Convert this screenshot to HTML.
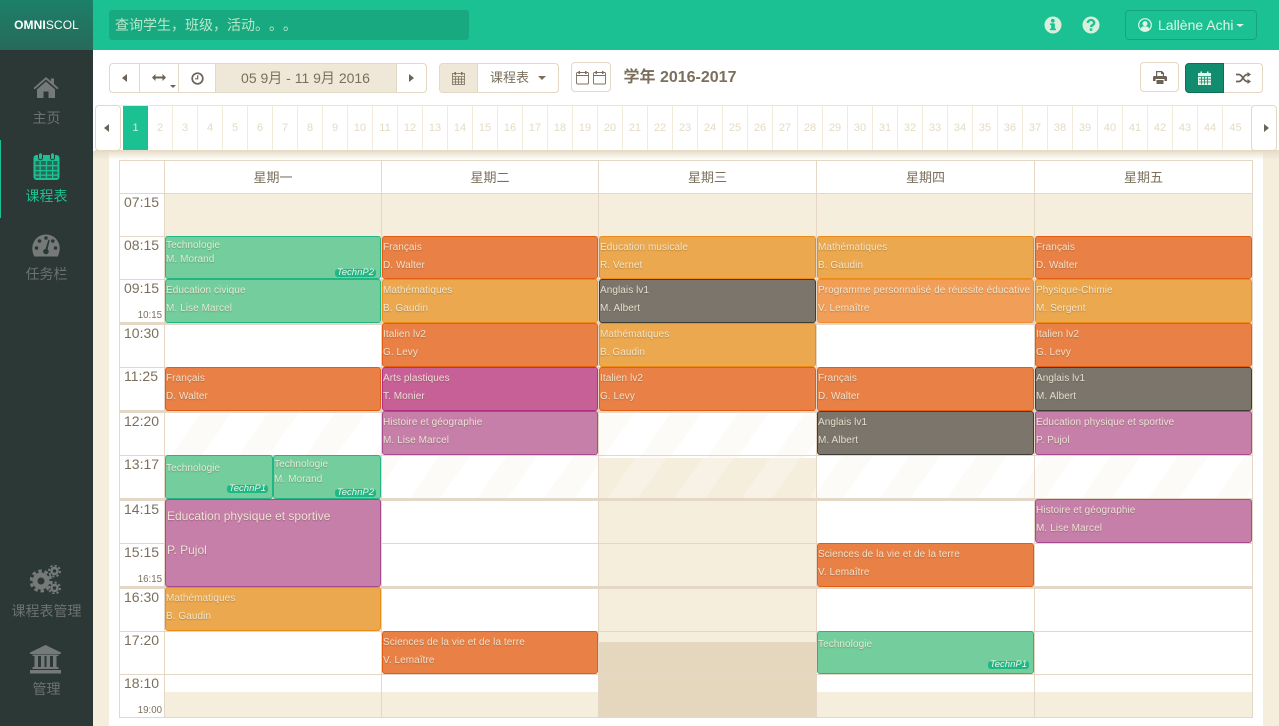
<!DOCTYPE html>
<html lang="zh"><head><meta charset="utf-8"><title>课程表</title>
<style>
*{box-sizing:border-box}
html,body{margin:0;padding:0;width:1279px;height:726px;overflow:hidden;background:#fff;font-family:"Liberation Sans","Noto Sans CJK SC",sans-serif;text-spacing-trim:space-all}
.a{position:absolute}
#side{left:0;top:0;width:93px;height:726px;background:#2b3835}
#logo{left:0;top:0;width:93px;height:50px;background:linear-gradient(#1c8068,#276a5c);color:#fff;font-size:12px;line-height:50px;text-align:center;letter-spacing:.1px}
#top{left:93px;top:0;width:1186px;height:50px;background:#1cc193}
#search{left:109px;top:10px;width:360px;height:30px;background:#19a981;border-radius:3px;color:#b6e8c9;font-size:14px;line-height:30px;padding-left:6px}
.nav{left:0;width:93px;text-align:center;font-size:14px;color:#6c7270;line-height:18px}
.btn{border:1px solid #e4d7c3;border-radius:4px;background:#fff;height:30px}
.sep{width:1px;background:#e4d7c3}
.wk{top:106px;height:44px;width:25px;border-right:1px solid #f3ead9;text-align:center;font-size:11px;line-height:44px;color:#e5dbc6}
.day{top:162px;height:32px;line-height:32px;text-align:center;font-size:13px;color:#7b6f5c}
.h{left:120px;width:1132px;height:1px;background:#e4d7c6}
.th{left:120px;width:1132px;height:3px;background:#e4d7c6}
.v{top:160px;width:1px;height:557px;background:#e4d7c6}
.t{left:124px;font-size:14px;line-height:16px;color:#7b6f5c}
.ts{left:120px;width:42px;text-align:right;font-size:9.700px;line-height:10px;color:#7b6f5c}
.e{position:absolute;border:1px solid;border-radius:3px;color:rgba(250,246,228,.84);font-size:10px;letter-spacing:.07px;line-height:18px;padding-top:2px;white-space:nowrap;overflow:hidden;text-shadow:0 1px 1px rgba(60,50,30,.3)}
.g{background:#74cd9d;border-color:#22b585}
.o{background:#e98146;border-color:#e25c12}
.y{background:#eba84e;border-color:#ec8c18}
.k{background:#7b756c;border-color:#3d3d36}
.m{background:#c86098;border-color:#b02f80}
.u{background:#c57fa8;border-color:#a8488e}
.l{background:#f09e58;border-color:#ee8c30}
.c1{left:165px;width:216px}.c2{left:382px;width:216px}.c3{left:599px;width:217px}.c4{left:817px;width:217px}.c5{left:1035px;width:217px}
.tag{position:absolute;right:4px;bottom:1px;height:8px;line-height:8px;background:#20b785;border-radius:3px;font-size:9.500px;letter-spacing:0;font-style:italic;color:#eef8ea;padding:0 2px;text-shadow:none}
svg{display:block}
</style></head><body>

<!-- page background -->
<div class="a" style="left:93px;top:151px;width:16px;height:575px;background:#f5eedd"></div>
<div class="a" style="left:1263px;top:151px;width:16px;height:575px;background:#f5eedd"></div>
<div class="a" style="left:93px;top:151px;width:16px;height:9px;background:linear-gradient(#e6dcc8,#f5eedd)"></div>
<div class="a" style="left:1263px;top:151px;width:16px;height:9px;background:linear-gradient(#e6dcc8,#f5eedd)"></div>
<div class="a" style="left:109px;top:151px;width:1154px;height:9px;background:linear-gradient(#e9dfcb,#f7f2e6 60%,#fff)"></div>

<!-- top bar -->
<div class="a" id="top"></div>
<div class="a" id="search">查询学生，班级，活动。。。</div>
<svg class="a" style="left:1044px;top:16px" width="18" height="18" viewBox="0 0 18 18"><circle cx="9" cy="9" r="8.500" fill="#d6f0dc"/><rect x="7.200" y="7.400" width="3.600" height="6.600" fill="#1cc193"/><rect x="6" y="7.400" width="4" height="1.600" fill="#1cc193"/><rect x="6" y="12.600" width="6" height="1.600" fill="#1cc193"/><circle cx="8.800" cy="4.800" r="1.900" fill="#1cc193"/></svg>
<svg class="a" style="left:1082px;top:16px" width="18" height="18" viewBox="0 0 18 18"><circle cx="9" cy="9" r="8.500" fill="#d6f0dc"/><path d="M5.800 7a3.200 3 0 0 1 6.400 0c0 2-3.200 2.200-3.200 4" fill="none" stroke="#1cc193" stroke-width="2.300"/><rect x="7.800" y="12.400" width="2.500" height="2.400" fill="#1cc193"/></svg>
<div class="a" style="left:1125px;top:10px;width:132px;height:30px;border:1px solid #17a47d;border-radius:4px"></div>
<svg class="a" style="left:1138px;top:18px" width="14" height="14" viewBox="0 0 14 14"><circle cx="7" cy="7" r="6.300" fill="none" stroke="#e0f5e8" stroke-width="1.200"/><circle cx="7" cy="5.600" r="2.500" fill="#e0f5e8"/><path d="M2.600 11.200c.6-2.400 2.400-3 4.400-3s3.800.6 4.400 3a6 6 0 0 1-8.800 0z" fill="#e0f5e8"/></svg>
<div class="a" style="left:1158px;top:10px;height:30px;line-height:30px;font-size:14px;color:#e0f5e8;white-space:nowrap">Lallène Achi</div>
<div class="a" style="left:1236px;top:24px;border-left:4px solid transparent;border-right:4px solid transparent;border-top:3.500px solid #e0f5e8"></div>

<!-- sidebar -->
<div class="a" id="side"></div>
<div class="a" id="logo"><b>OMNI</b>SCOL</div>
<div class="a" style="left:0;top:140px;width:1px;height:78px;background:#1cc193"></div>
<svg class="a" style="left:33px;top:76px" width="26" height="23" viewBox="0 0 26 23" fill="#757a79"><path d="M13 1 .5 12l1.200 1.400L13 3.500l11.300 9.900 1.200-1.400L21 8V2.500h-3.200v2.700z"/><path d="M13 5.500 4 13.400V22h6.500v-6.500h5V22H22v-8.600z"/></svg>
<div class="a nav" style="top:109px">主页</div>
<svg class="a" style="left:33px;top:152px" width="27" height="28" viewBox="0 0 27 28"><rect x=".5" y="3" width="26" height="25" rx="3" fill="#1cc193"/><rect x="2.500" y="9" width="22" height="17" fill="#2b6a58"/><g fill="#1cc193"><rect x="6.500" y="9" width="1.300" height="17"/><rect x="12.800" y="9" width="1.300" height="17"/><rect x="19" y="9" width="1.300" height="17"/><rect x="2.500" y="13" width="22" height="1.300"/><rect x="2.500" y="18" width="22" height="1.300"/><rect x="2.500" y="22.500" width="22" height="1.300"/></g><rect x="5.500" y=".8" width="4" height="7" rx="2" fill="#1cc193" stroke="#2b3835" stroke-width="1"/><rect x="17.500" y=".8" width="4" height="7" rx="2" fill="#1cc193" stroke="#2b3835" stroke-width="1"/></svg>
<div class="a nav" style="top:187px;color:#1cc193">课程表</div>
<svg class="a" style="left:32px;top:234px" width="28" height="23" viewBox="0 0 28 23"><path d="M14 .5A13.700 13.700 0 0 0 .3 14.200c0 3 .7 5.600 2 8.300h23.400c1.300-2.700 2-5.300 2-8.300A13.700 13.700 0 0 0 14 .5z" fill="#757a79"/><g fill="#2b3835"><circle cx="4.500" cy="14" r="1.800"/><circle cx="7.500" cy="7" r="1.800"/><circle cx="14" cy="4" r="1.800"/><circle cx="23.500" cy="14" r="1.800"/><circle cx="20.800" cy="7" r="1.800"/><path d="M16.500 5.500 17.800 6 15.600 15.200a2.800 2.800 0 1 1-2-.5z"/></g></svg>
<div class="a nav" style="top:265px">任务栏</div>
<svg class="a" style="left:30px;top:565px" width="32" height="29" viewBox="0 0 32 29"><g fill="none" stroke="#757a79"><circle cx="11" cy="16" r="6" stroke-width="5"/><circle cx="11" cy="16" r="10" stroke-width="3" stroke-dasharray="3.500 2.800"/><circle cx="24.500" cy="6" r="3" stroke-width="2.500"/><circle cx="24.500" cy="6" r="5.500" stroke-width="2" stroke-dasharray="2.200 2.100"/><circle cx="24.500" cy="23" r="3" stroke-width="2.500"/><circle cx="24.500" cy="23" r="5.500" stroke-width="2" stroke-dasharray="2.200 2.100"/></g></svg>
<div class="a nav" style="top:602px">课程表管理</div>
<svg class="a" style="left:30px;top:645px" width="31" height="29" viewBox="0 0 31 29" fill="#757a79"><path d="M15.500 0 0 7.500V9h31V7.500z"/><rect x="2.500" y="9.500" width="26" height="1.500"/><rect x="4.500" y="11" width="3.500" height="11"/><rect x="11" y="11" width="3.500" height="11"/><rect x="16.500" y="11" width="3.500" height="11"/><rect x="23" y="11" width="3.500" height="11"/><rect x="2.500" y="22" width="26" height="2"/><rect x="0" y="25" width="31" height="3.500"/></svg>
<div class="a nav" style="top:680px">管理</div>

<!-- toolbar -->
<div class="a btn" style="left:109px;top:63px;width:318px"></div>
<div class="a" style="left:215px;top:64px;width:181px;height:28px;background:#efe7d7"></div>
<div class="a sep" style="left:139px;top:64px;height:28px"></div>
<div class="a sep" style="left:178px;top:64px;height:28px"></div>
<div class="a sep" style="left:215px;top:64px;height:28px"></div>
<div class="a sep" style="left:396px;top:64px;height:28px"></div>
<div class="a" style="left:122px;top:74px;border-top:4px solid transparent;border-bottom:4px solid transparent;border-right:5px solid #6b6356"></div>
<svg class="a" style="left:152px;top:73px" width="14" height="9" viewBox="0 0 14 9" fill="#6b6356"><path d="M0 4.500 3.500 1v2.500h7V1L14 4.500 10.500 8V5.500h-7V8z"/></svg>
<div class="a" style="left:170px;top:85px;border-left:3px solid transparent;border-right:3px solid transparent;border-top:3px solid #6b6356"></div>
<svg class="a" style="left:191px;top:72px" width="13" height="13" viewBox="0 0 13 13"><circle cx="6.500" cy="6.500" r="5.300" fill="none" stroke="#6b6356" stroke-width="1.700"/><path d="M6.700 3.200v3.600H4" fill="none" stroke="#6b6356" stroke-width="1.200"/></svg>
<div class="a" style="left:215px;top:64px;width:181px;height:28px;line-height:28px;text-align:center;font-size:14px;color:#7b6f5c">05 9月 - 11 9月 2016</div>
<div class="a" style="left:409px;top:74px;border-top:4px solid transparent;border-bottom:4px solid transparent;border-left:5px solid #6b6356"></div>

<div class="a btn" style="left:439px;top:63px;width:120px"></div>
<div class="a" style="left:440px;top:64px;width:38px;height:28px;background:#efe7d7;border-right:1px solid #e4d7c3;border-radius:3px 0 0 3px"></div>
<svg class="a" style="left:452px;top:71px" width="13" height="14" viewBox="0 0 13 14"><g fill="none" stroke="#7b6f5c" stroke-width=".8"><rect x=".5" y="2.500" width="12" height="11"/><path d="M.5 5.500h12M.5 8.200h12M.5 11h12M3.500 5.500v8M6.500 5.500v8M9.500 5.500v8"/></g><rect x="2.500" y="1" width="1.500" height="3" fill="#7b6f5c"/><rect x="9" y="1" width="1.500" height="3" fill="#7b6f5c"/></svg>
<div class="a" style="left:490px;top:64px;line-height:28px;font-size:13px;color:#7b6f5c">课程表</div>
<div class="a" style="left:538px;top:76px;border-left:4px solid transparent;border-right:4px solid transparent;border-top:4px solid #7b6f5c"></div>

<div class="a btn" style="left:571px;top:62px;width:40px"></div>
<svg class="a" style="left:576px;top:70px" width="30" height="15" viewBox="0 0 30 15"><g fill="none" stroke="#7b6f5c" stroke-width=".9"><rect x=".5" y="2.500" width="12" height="11.500" rx="1"/><rect x="17.500" y="2.500" width="12" height="11.500" rx="1"/><path d="M.5 5.500h12M17.500 5.500h12"/></g><g fill="#7b6f5c"><rect x="2.500" y="1" width="1.500" height="3"/><rect x="9" y="1" width="1.500" height="3"/><rect x="19.500" y="1" width="1.500" height="3"/><rect x="26" y="1" width="1.500" height="3"/></g></svg>
<div class="a" style="left:623.500px;top:67px;line-height:22px;font-size:16px;font-weight:bold;color:#7b6f5c;white-space:nowrap">学年 2016-2017</div>

<div class="a btn" style="left:1140px;top:62px;width:39px"></div>
<svg class="a" style="left:1153px;top:71px" width="14" height="13" viewBox="0 0 14 13" fill="#6b6356"><path d="M3 0h6l2 2v3H9.800V3H8V1.200H4.200V5H3z"/><path d="M1.500 5h11A1.500 1.500 0 0 1 14 6.500V10h-2.500V8h-9v2H0V6.500A1.500 1.500 0 0 1 1.500 5z"/><path d="M3.500 9h7v4h-7z"/></svg>
<div class="a btn" style="left:1185px;top:63px;width:78px"></div>
<div class="a" style="left:1185px;top:63px;width:39px;height:30px;background:#128c6e;border:1px solid #0e6f57;border-radius:4px 0 0 4px"></div>
<svg class="a" style="left:1198px;top:71px" width="13" height="14" viewBox="0 0 13 14"><rect x="0" y="2" width="13" height="12" fill="#e6f5ea"/><g fill="none" stroke="#128c6e" stroke-width=".8"><path d="M0 5.500h13M1 8.200h12M1 11h12M3.500 5.500v8M6.500 5.500v8M9.500 5.500v8"/></g><rect x="2.500" y=".5" width="1.500" height="3.500" fill="#e6f5ea"/><rect x="9" y=".5" width="1.500" height="3.500" fill="#e6f5ea"/></svg>
<svg class="a" style="left:1236px;top:72px" width="15" height="12" viewBox="0 0 15 12"><g fill="none" stroke="#6b6356" stroke-width="1.700"><path d="M0 2.500h3c3.500 0 4.500 7 8 7h1"/><path d="M0 9.500h3c3.500 0 4.500-7 8-7h1"/></g><path d="M11.500 0 15 2.500 11.500 5zM11.500 7 15 9.500 11.500 12z" fill="#6b6356"/></svg>

<!-- week scroller -->
<div class="a" style="left:121px;top:105px;width:1131px;height:1px;background:#eee4d3"></div>
<div class="a" style="left:95px;top:150px;width:1184px;height:2px;background:#e6dcc8"></div>
<div class="a" style="left:95px;top:105px;width:26px;height:46px;background:#fff;border:1px solid #e4d7c3;border-radius:4px"></div>
<div class="a" style="left:104px;top:124px;border-top:4px solid transparent;border-bottom:4px solid transparent;border-right:5px solid #6b6356"></div>
<div class="a" style="left:1251px;top:105px;width:26px;height:46px;background:#fff;border:1px solid #e4d7c3;border-radius:4px"></div>
<div class="a" style="left:1264px;top:124px;border-top:4px solid transparent;border-bottom:4px solid transparent;border-left:5px solid #6b6356"></div>
<div class="a wk" style="left:123px;background:#1cc193;color:#cdeedb;border:0">1</div>
<div class="a wk" style="left:148px">2</div><div class="a wk" style="left:173px">3</div><div class="a wk" style="left:198px">4</div><div class="a wk" style="left:223px">5</div><div class="a wk" style="left:248px">6</div><div class="a wk" style="left:273px">7</div><div class="a wk" style="left:298px">8</div><div class="a wk" style="left:323px">9</div><div class="a wk" style="left:348px">10</div><div class="a wk" style="left:373px">11</div><div class="a wk" style="left:398px">12</div><div class="a wk" style="left:423px">13</div><div class="a wk" style="left:448px">14</div><div class="a wk" style="left:473px">15</div><div class="a wk" style="left:498px">16</div><div class="a wk" style="left:523px">17</div><div class="a wk" style="left:548px">18</div><div class="a wk" style="left:573px">19</div><div class="a wk" style="left:598px">20</div><div class="a wk" style="left:623px">21</div><div class="a wk" style="left:648px">22</div><div class="a wk" style="left:673px">23</div><div class="a wk" style="left:698px">24</div><div class="a wk" style="left:723px">25</div><div class="a wk" style="left:748px">26</div><div class="a wk" style="left:773px">27</div><div class="a wk" style="left:798px">28</div><div class="a wk" style="left:823px">29</div><div class="a wk" style="left:848px">30</div><div class="a wk" style="left:873px">31</div><div class="a wk" style="left:898px">32</div><div class="a wk" style="left:923px">33</div><div class="a wk" style="left:948px">34</div><div class="a wk" style="left:973px">35</div><div class="a wk" style="left:998px">36</div><div class="a wk" style="left:1023px">37</div><div class="a wk" style="left:1048px">38</div><div class="a wk" style="left:1073px">39</div><div class="a wk" style="left:1098px">40</div><div class="a wk" style="left:1123px">41</div><div class="a wk" style="left:1148px">42</div><div class="a wk" style="left:1173px">43</div><div class="a wk" style="left:1198px">44</div><div class="a wk" style="left:1223px;border-right:0">45</div>

<!-- grid backgrounds -->
<div class="a" style="left:165px;top:194px;width:1087px;height:42px;background:#f5eedd"></div>
<div class="a" style="left:165px;top:692px;width:1087px;height:25px;background:#f5eedd"></div>
<div class="a" style="left:165px;top:412px;width:1087px;height:87px;background:repeating-linear-gradient(125deg,#fff 0,#fff 30px,#fdfbf7 30px,#fdfbf7 55px)"></div>
<div class="a" style="left:599px;top:458px;width:217px;height:184px;background:#f5eedd"></div>
<div class="a" style="left:599px;top:458px;width:217px;height:41px;background:repeating-linear-gradient(125deg,#f5eedd 0,#f5eedd 30px,#f7f2e5 30px,#f7f2e5 55px)"></div>
<div class="a" style="left:598px;top:642px;width:218px;height:75px;background:#e4d7bd"></div>

<!-- grid lines -->
<div class="a" style="left:119px;top:160px;width:1134px;height:558px;border:1px solid #e4d7c6"></div>
<div class="a h" style="top:193px"></div><div class="a h" style="top:236px"></div><div class="a h" style="top:279px"></div><div class="a th" style="top:322px"></div><div class="a h" style="top:367px"></div><div class="a th" style="top:410px"></div><div class="a h" style="top:455px"></div><div class="a th" style="top:498px"></div><div class="a h" style="top:543px"></div><div class="a th" style="top:586px"></div><div class="a h" style="top:631px"></div><div class="a h" style="top:674px"></div>
<div class="a v" style="left:164px"></div><div class="a v" style="left:381px"></div><div class="a v" style="left:598px"></div><div class="a v" style="left:816px"></div><div class="a v" style="left:1034px"></div>

<div class="a day" style="left:165px;width:216px">星期一</div><div class="a day" style="left:382px;width:216px">星期二</div><div class="a day" style="left:599px;width:217px">星期三</div><div class="a day" style="left:817px;width:217px">星期四</div><div class="a day" style="left:1035px;width:217px">星期五</div>

<div class="a t" style="top:194px">07:15</div><div class="a t" style="top:237px">08:15</div><div class="a t" style="top:280px">09:15</div><div class="a ts" style="top:311px">10:15</div><div class="a t" style="top:325px">10:30</div><div class="a t" style="top:368px">11:25</div><div class="a t" style="top:413px">12:20</div><div class="a t" style="top:456px">13:17</div><div class="a t" style="top:501px">14:15</div><div class="a t" style="top:544px">15:15</div><div class="a ts" style="top:575px">16:15</div><div class="a t" style="top:589px">16:30</div><div class="a t" style="top:632px">17:20</div><div class="a t" style="top:675px">18:10</div><div class="a ts" style="top:706px">19:00</div>

<!-- events: monday -->
<div class="e g c1" style="top:236px;height:43px;line-height:14px">Technologie<br>M. Morand<span class="tag">TechnP2</span></div>
<div class="e g c1" style="top:279px;height:44px">Education civique<br>M. Lise Marcel</div>
<div class="e o c1" style="top:367px;height:44px">Français<br>D. Walter</div>
<div class="e g" style="left:165px;top:455px;width:108px;height:44px;line-height:24px;padding-top:1px">Technologie<span class="tag" style="bottom:5px;line-height:8px">TechnP1</span></div>
<div class="e g" style="left:273px;top:455px;width:108px;height:44px;line-height:15px;padding-top:1px">Technologie<br>M. Morand<span class="tag">TechnP2</span></div>
<div class="e u c1" style="top:499px;height:88px;font-size:12px;letter-spacing:0;line-height:34px;padding-left:1px;padding-top:0"><span style="position:relative;top:-1px">Education physique et sportive<br>P. Pujol</span></div>
<div class="e y c1" style="top:587px;height:44px">Mathématiques<br>B. Gaudin</div>
<!-- tuesday -->
<div class="e o c2" style="top:236px;height:43px">Français<br>D. Walter</div>
<div class="e y c2" style="top:279px;height:44px">Mathématiques<br>B. Gaudin</div>
<div class="e o c2" style="top:323px;height:44px">Italien lv2<br>G. Levy</div>
<div class="e m c2" style="top:367px;height:44px">Arts plastiques<br>T. Monier</div>
<div class="e u c2" style="top:411px;height:44px">Histoire et géographie<br>M. Lise Marcel</div>
<div class="e o c2" style="top:631px;height:43px">Sciences de la vie et de la terre<br>V. Lemaître</div>
<!-- wednesday -->
<div class="e y c3" style="top:236px;height:43px">Education musicale<br>R. Vernet</div>
<div class="e k c3" style="top:279px;height:44px">Anglais lv1<br>M. Albert</div>
<div class="e y c3" style="top:323px;height:44px">Mathématiques<br>B. Gaudin</div>
<div class="e o c3" style="top:367px;height:44px">Italien lv2<br>G. Levy</div>
<!-- thursday -->
<div class="e y c4" style="top:236px;height:43px">Mathématiques<br>B. Gaudin</div>
<div class="e l c4" style="top:279px;height:44px">Programme personnalisé de réussite éducative<br>V. Lemaître</div>
<div class="e o c4" style="top:367px;height:44px">Français<br>D. Walter</div>
<div class="e k c4" style="top:411px;height:44px">Anglais lv1<br>M. Albert</div>
<div class="e o c4" style="top:543px;height:44px">Sciences de la vie et de la terre<br>V. Lemaître</div>
<div class="e g c4" style="top:631px;height:43px;line-height:24px;padding-top:1px">Technologie<span class="tag" style="line-height:8px;bottom:4px">TechnP1</span></div>
<!-- friday -->
<div class="e o c5" style="top:236px;height:43px">Français<br>D. Walter</div>
<div class="e y c5" style="top:279px;height:44px">Physique-Chimie<br>M. Sergent</div>
<div class="e o c5" style="top:323px;height:44px">Italien lv2<br>G. Levy</div>
<div class="e k c5" style="top:367px;height:44px">Anglais lv1<br>M. Albert</div>
<div class="e u c5" style="top:411px;height:44px">Education physique et sportive<br>P. Pujol</div>
<div class="e u c5" style="top:499px;height:44px">Histoire et géographie<br>M. Lise Marcel</div>
</body></html>
